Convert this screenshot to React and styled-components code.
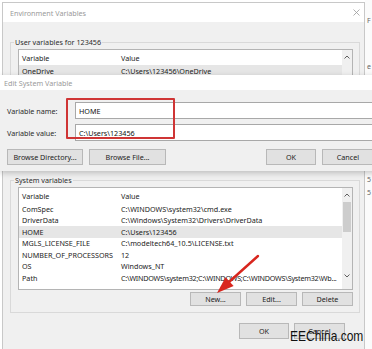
import styled, { createGlobalStyle } from "styled-components";

const GlobalStyle = createGlobalStyle`
  html, body { margin: 0; padding: 0; background: #fff; }
  body {
    font-family: "Noto Sans", "Open Sans", sans-serif;
    font-size: 7.2px;
    color: #2b2b2b;
  }
`;

const userRows = [["OneDrive", "C:\\Users\\123456\\OneDrive", true]];

const sysRows = [
  ["ComSpec", "C:\\WINDOWS\\system32\\cmd.exe"],
  ["DriverData", "C:\\Windows\\System32\\Drivers\\DriverData"],
  ["HOME", "C:\\Users\\123456", true],
  ["MGLS_LICENSE_FILE", "C:\\modeltech64_10.5\\LICENSE.txt"],
  ["NUMBER_OF_PROCESSORS", "12"],
  ["OS", "Windows_NT"],
  ["Path", "C:\\WINDOWS\\system32;C:\\WINDOWS;C:\\WINDOWS\\System32\\Wb...", false, true],
];

const Chevron = ({ up }) => (
  <svg width="6" height="4" viewBox="0 0 6 4">
    <path d={up ? "M0.5 3.5 L3 1 L5.5 3.5" : "M0.5 0.5 L3 3 L5.5 0.5"} fill="none" stroke="#606060" strokeWidth="1" />
  </svg>
);

const VarList = ({ rows, height, thumb }) => (
  <List $height={height}>
    <Rows>
      <Row $header>
        <Cell>Variable</Cell>
        <Cell>Value</Cell>
      </Row>
      {rows.map(([name, value, selected, tight]) => (
        <Row key={name} $selected={selected}>
          <Cell>{name}</Cell>
          <Cell $tight={tight}>{value}</Cell>
        </Row>
      ))}
    </Rows>
    <Scrollbar>
      <ArrowBox><Chevron up /></ArrowBox>
      {thumb && <Thumb />}
      <Track />
      {thumb && <ArrowBox $bottom><Chevron /></ArrowBox>}
    </Scrollbar>
  </List>
);

const App = () => {
  return (
    <>
      <GlobalStyle />
      <Page>
        <EnvWindow>
          <TitleBar>
            <span>Environment Variables</span>
            <svg width="7" height="7" viewBox="0 0 7 7">
              <path d="M0.5 0.5 L6.5 6.5 M6.5 0.5 L0.5 6.5" stroke="#9a9a9a" strokeWidth="0.8" />
            </svg>
          </TitleBar>
          <WindowBody>
            <Group>
              <Legend>User variables for 123456</Legend>
              <VarList rows={userRows} height={110} />
            </Group>
            <Group $gap={7}>
              <Legend>System variables</Legend>
              <VarList rows={sysRows} height={101} thumb />
              <ButtonRow $top={2}>
                <Button $w={51} $h={14}>New...</Button>
                <Button $w={51} $h={14}>Edit...</Button>
                <Button $w={51} $h={14}>Delete</Button>
              </ButtonRow>
            </Group>
            <ButtonRow $top={10} $right={15}>
              <Button $w={50} $h={16}>OK</Button>
              <Button $w={51} $h={16}>Cancel</Button>
            </ButtonRow>
          </WindowBody>
        </EnvWindow>

        <BackStrip>
          <Glyph $top={16}>F</Glyph>
          <Glyph $top={36}>e</Glyph>
          <Glyph $top={103}>5</Glyph>
          <Glyph $top={3}>5</Glyph>
        </BackStrip>

        <Dialog>
          <DialogTitle>Edit System Variable</DialogTitle>
          <DialogBody>
            <FieldRow>
              <FieldLabel>Variable name:</FieldLabel>
              <Field>HOME</Field>
            </FieldRow>
            <FieldRow>
              <FieldLabel>Variable value:</FieldLabel>
              <Field>C:\Users\123456</Field>
            </FieldRow>
            <DialogButtons>
              <Button $w={76} $h={16}>Browse Directory...</Button>
              <Button $w={77} $h={16}>Browse File...</Button>
              <Spacer />
              <Button $w={50} $h={16}>OK</Button>
              <Button $w={52} $h={16}>Cancel</Button>
            </DialogButtons>
          </DialogBody>
          <Highlight />
        </Dialog>

        <Arrow width="60" height="50" viewBox="0 0 60 50">
          <line x1="53" y1="6" x2="24" y2="32" stroke="#d8261e" strokeWidth="2.4" strokeLinecap="round" />
          <polygon points="12,43 28.6,36 20.6,27.2" fill="#d8261e" />
        </Arrow>

        <Watermark>EEChina.com</Watermark>
      </Page>
    </>
  );
};

export default App;

const Page = styled.div`
  position: relative;
  width: 372px;
  height: 349px;
  overflow: hidden;
  display: flex;
  background: #fff;
`;

const EnvWindow = styled.div`
  flex: none;
  width: 361px;
  margin: 2px 0 0 2px;
  border: 1px solid #c8c8c8;
  border-bottom: none;
  background: #f0f0f0;
  display: flex;
  flex-direction: column;
`;

const TitleBar = styled.div`
  height: 19px;
  background: #fff;
  display: flex;
  align-items: center;
  justify-content: space-between;
  padding: 0 4px 0 7px;
  color: #9a9a9a;
`;

const WindowBody = styled.div`
  display: flex;
  flex-direction: column;
  padding: 15px 4px 0 7px;
`;

const Group = styled.fieldset`
  margin: ${(p) => p.$gap || 0}px 0 0 0;
  padding: 1px 6px 6px 7px;
  border: 1px solid #d9d9d9;
  min-width: 0;
`;

const Legend = styled.legend`
  padding: 0 1px;
  margin-left: -4px;
  color: #2e2e2e;
  line-height: 11px;
`;

const List = styled.div`
  height: ${(p) => p.$height}px;
  border: 1px solid #b4b4b4;
  background: #fff;
  display: flex;
  overflow: hidden;
`;

const Rows = styled.div`
  flex: 1;
  min-width: 0;
  display: flex;
  flex-direction: column;
`;

const Row = styled.div`
  flex: none;
  display: grid;
  grid-template-columns: 99px minmax(0, 1fr);
  align-items: center;
  height: ${(p) => (p.$header ? 15 : 11.5)}px;
  background: ${(p) => (p.$selected ? "#e6e6e6" : "transparent")};
  color: #222;
`;

const Cell = styled.div`
  padding: 0 1px 0 3px;
  white-space: nowrap;
  overflow: hidden;
  letter-spacing: ${(p) => (p.$tight ? "-0.24px" : "normal")};
`;

const Scrollbar = styled.div`
  flex: none;
  width: 10px;
  background: #f0f0f0;
  display: flex;
  flex-direction: column;
`;

const ArrowBox = styled.div`
  flex: none;
  height: 13px;
  display: flex;
  align-items: center;
  justify-content: center;
  margin-bottom: ${(p) => (p.$bottom ? 7 : 0)}px;
`;

const Thumb = styled.div`
  flex: none;
  height: 30px;
  margin: 1px 1px 0;
  background: #cdcdcd;
`;

const Track = styled.div`
  flex: 1;
`;

const ButtonRow = styled.div`
  display: flex;
  justify-content: flex-end;
  gap: 5px;
  margin-top: ${(p) => p.$top}px;
  padding-right: ${(p) => p.$right || 0}px;
`;

const Button = styled.div`
  flex: none;
  box-sizing: border-box;
  width: ${(p) => p.$w}px;
  height: ${(p) => p.$h}px;
  background: #e1e1e1;
  border: 1px solid #b8b8b8;
  display: flex;
  align-items: center;
  justify-content: center;
  color: #222;
  white-space: nowrap;
`;

const BackStrip = styled.div`
  flex: 1;
  display: flex;
  flex-direction: column;
  padding-left: 2px;
  background: #fbfbfb;
  color: #666;
  font-size: 7px;
`;

const Glyph = styled.span`
  margin-top: ${(p) => p.$top}px;
  line-height: 10px;
`;

const Dialog = styled.div`
  position: absolute;
  top: 75px;
  left: 0;
  width: 392px;
  background: #f0f0f0;
  box-shadow: 0 2px 6px rgba(0, 0, 0, 0.22);
`;

const DialogTitle = styled.div`
  height: 15px;
  background: #fff;
  display: flex;
  align-items: center;
  padding-left: 4px;
  color: #9a9a9a;
`;

const DialogBody = styled.div`
  display: flex;
  flex-direction: column;
  gap: 5px;
  padding: 12px 18px 6px 7px;
`;

const FieldRow = styled.div`
  display: flex;
  align-items: center;
`;

const FieldLabel = styled.div`
  flex: none;
  width: 68px;
  color: #2b2b2b;
`;

const Field = styled.div`
  flex: 1;
  height: 15px;
  border: 1px solid #a8a8a8;
  background: #fff;
  padding-left: 3px;
  display: flex;
  align-items: center;
  color: #111;
`;

const DialogButtons = styled.div`
  display: flex;
  gap: 6px;
  margin-top: 3px;
`;

const Spacer = styled.div`
  flex: 1;
`;

const Highlight = styled.div`
  position: absolute;
  left: 66px;
  top: 23px;
  width: 105px;
  height: 37px;
  border: 2px solid #cf3535;
  border-radius: 1px;
`;

const Arrow = styled.svg`
  position: absolute;
  left: 205px;
  top: 250px;
`;

const Watermark = styled.div`
  position: absolute;
  left: 290px;
  top: 326px;
  font-family: "Liberation Sans", Arial, sans-serif;
  font-size: 15px;
  line-height: 20px;
  color: #111;
  transform: scaleX(0.8);
  transform-origin: left center;
  white-space: nowrap;
`;
